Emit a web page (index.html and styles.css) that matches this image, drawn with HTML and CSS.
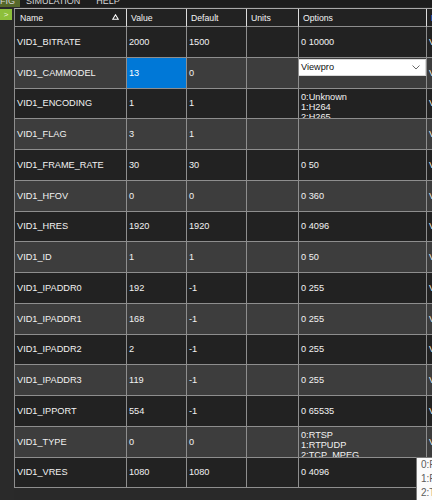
FILE: index.html
```html
<!DOCTYPE html>
<html>
<head>
<meta charset="utf-8">
<link rel="stylesheet" href="styles.css">
</head>
<body>
<div class="menubar">
  <span class="menu-item active">CONFIG</span>
  <span class="menu-item">SIMULATION</span>
  <span class="menu-item">HELP</span>
</div>
<div class="main">
  <div class="sidebar">
    <div class="toggle">&gt;</div>
  </div>
  <div class="grid-wrap">
    <div class="grid">
      <div class="row head">
        <div class="cell first">Name<svg class="sort" width="7" height="6" viewBox="0 0 7 6"><path d="M3.5 0.8 L6.3 5.3 L0.7 5.3 Z" fill="none" stroke="#fff" stroke-width="1.1"/></svg></div>
        <div class="cell">Value</div>
        <div class="cell">Default</div>
        <div class="cell">Units</div>
        <div class="cell">Options</div>
        <div class="cell desc-head">Desc</div>
      </div>
      <div class="row odd">
        <div class="cell">VID1_BITRATE</div><div class="cell">2000</div><div class="cell">1500</div><div class="cell"></div><div class="cell">0 10000</div><div class="cell">Video bitrate</div>
      </div>
      <div class="row even">
        <div class="cell">VID1_CAMMODEL</div><div class="cell selected">13</div><div class="cell">0</div><div class="cell"></div>
        <div class="cell top"><div class="combo"><span>Viewpro</span><svg width="8" height="5" viewBox="0 0 8 5"><path d="M0.5 0.5 L4 4 L7.5 0.5" fill="none" stroke="#6a6a6a" stroke-width="1"/></svg></div></div>
        <div class="cell">Video camera model</div>
      </div>
      <div class="row odd">
        <div class="cell">VID1_ENCODING</div><div class="cell">1</div><div class="cell">1</div><div class="cell"></div><div class="cell multi">0:Unknown<br>1:H264<br>2:H265</div><div class="cell">Video encoding</div>
      </div>
      <div class="row even">
        <div class="cell">VID1_FLAG</div><div class="cell">3</div><div class="cell">1</div><div class="cell"></div><div class="cell"></div><div class="cell">Video flags</div>
      </div>
      <div class="row odd">
        <div class="cell">VID1_FRAME_RATE</div><div class="cell">30</div><div class="cell">30</div><div class="cell"></div><div class="cell">0 50</div><div class="cell">Video framerate</div>
      </div>
      <div class="row even">
        <div class="cell">VID1_HFOV</div><div class="cell">0</div><div class="cell">0</div><div class="cell"></div><div class="cell">0 360</div><div class="cell">Video horizontal FOV</div>
      </div>
      <div class="row odd">
        <div class="cell">VID1_HRES</div><div class="cell">1920</div><div class="cell">1920</div><div class="cell"></div><div class="cell">0 4096</div><div class="cell">Video horizontal resolution</div>
      </div>
      <div class="row even">
        <div class="cell">VID1_ID</div><div class="cell">1</div><div class="cell">1</div><div class="cell"></div><div class="cell">0 50</div><div class="cell">Video stream id</div>
      </div>
      <div class="row odd">
        <div class="cell">VID1_IPADDR0</div><div class="cell">192</div><div class="cell">-1</div><div class="cell"></div><div class="cell">0 255</div><div class="cell">Video IP address</div>
      </div>
      <div class="row even">
        <div class="cell">VID1_IPADDR1</div><div class="cell">168</div><div class="cell">-1</div><div class="cell"></div><div class="cell">0 255</div><div class="cell">Video IP address</div>
      </div>
      <div class="row odd">
        <div class="cell">VID1_IPADDR2</div><div class="cell">2</div><div class="cell">-1</div><div class="cell"></div><div class="cell">0 255</div><div class="cell">Video IP address</div>
      </div>
      <div class="row even">
        <div class="cell">VID1_IPADDR3</div><div class="cell">119</div><div class="cell">-1</div><div class="cell"></div><div class="cell">0 255</div><div class="cell">Video IP address</div>
      </div>
      <div class="row odd">
        <div class="cell">VID1_IPPORT</div><div class="cell">554</div><div class="cell">-1</div><div class="cell"></div><div class="cell">0 65535</div><div class="cell">Video IP port</div>
      </div>
      <div class="row even">
        <div class="cell">VID1_TYPE</div><div class="cell">0</div><div class="cell">0</div><div class="cell"></div><div class="cell multi">0:RTSP<br>1:RTPUDP<br>2:TCP_MPEG</div><div class="cell">Video type</div>
      </div>
      <div class="row odd">
        <div class="cell">VID1_VRES</div><div class="cell">1080</div><div class="cell">1080</div><div class="cell"></div><div class="cell">0 4096</div><div class="cell"></div>
      </div>
    </div>
  </div>
</div>
<div class="tooltip">0:RTSP<br>1:RTPUDP<br>2:TCP_MPEG</div>
</body>
</html>
```
FILE: styles.css
```css
html, body {
  margin: 0;
  padding: 0;
  background: #292929;
  width: 432px;
  height: 500px;
  overflow: hidden;
  font-family: "Liberation Sans", Arial, sans-serif;
}

.menubar {
  height: 7px;
  background: #1d1d1d;
  display: flex;
  overflow: hidden;
}

.menu-item {
  font-size: 9px;
  line-height: 9px;
  margin-top: -3px;
  color: #d6d6d6;
  padding: 0 8px;
  white-space: nowrap;
}

.menu-item.active {
  background: #56682a;
  margin-left: -26px;
  padding: 0 5px 0 6px;
}

.menu-item:nth-child(2) {
  padding: 0 8px 0 6px;
}

.main {
  display: flex;
  height: 493px;
}

.sidebar {
  width: 14px;
  flex: none;
  background: #2a2a2a;
  padding-top: 2px;
}

.toggle {
  width: 12px;
  height: 11px;
  background: #8dbf3a;
  color: #eef6dc;
  font-size: 8px;
  line-height: 11px;
  text-align: center;
}

.grid-wrap {
  flex: 1;
  overflow: hidden;
  padding-top: 1px;
}

.grid {
  display: grid;
  grid-template-columns: 112px 60px 60px 52px 128px 100px;
  grid-template-rows: 18px repeat(15, 30.75px);
  width: 512px;
  border-top: 1px solid #a9a9a9;
  border-left: 1px solid #8e8e8e;
}

.row {
  display: contents;
}

.cell {
  display: flex;
  align-items: center;
  overflow: hidden;
  white-space: nowrap;
  box-sizing: border-box;
  border-right: 1px solid #8e8e8e;
  border-bottom: 1px solid #8e8e8e;
  padding-left: 2px;
  color: #f2f2f2;
  font-size: 9.2px;
}

.row.head .cell {
  background: #222222;
  border-right-color: #dcdcdc;
  border-bottom-color: #8e8e8e;
  padding-left: 4px;
  font-size: 8.7px;
  color: #f4f4f4;
  position: relative;
}

.row.head .cell.first {
  padding-left: 5px;
}

.row.head .cell.desc-head {
  color: #7fb0e8;
}

.sort {
  position: absolute;
  right: 7px;
  top: 5px;
}

.row.odd .cell {
  background: #222222;
}

.row.even .cell {
  background: #3d3d3d;
}

.row .cell.selected {
  background: #0078d7;
  color: #ffffff;
}

.cell.top {
  align-items: flex-start;
  padding: 0;
}

.combo {
  margin-top: 1px;
  margin-left: -1px;
  width: 128px;
  height: 17px;
  flex: none;
  background: #ffffff;
  border: 1px solid #d8d8d8;
  box-sizing: border-box;
  display: flex;
  align-items: center;
  justify-content: space-between;
  padding: 0 5px 0 2px;
  color: #111111;
  font-size: 9.2px;
}

.cell.multi {
  align-items: flex-start;
  padding-top: 3px;
  line-height: 10px;
}

.tooltip {
  position: absolute;
  left: 416px;
  top: 457px;
  width: 80px;
  background: #fbfbfb;
  border: 1px solid #7a7a7a;
  color: #5c5c5c;
  font-size: 10px;
  line-height: 14px;
  padding: 0 4px;
  white-space: nowrap;
}
```
